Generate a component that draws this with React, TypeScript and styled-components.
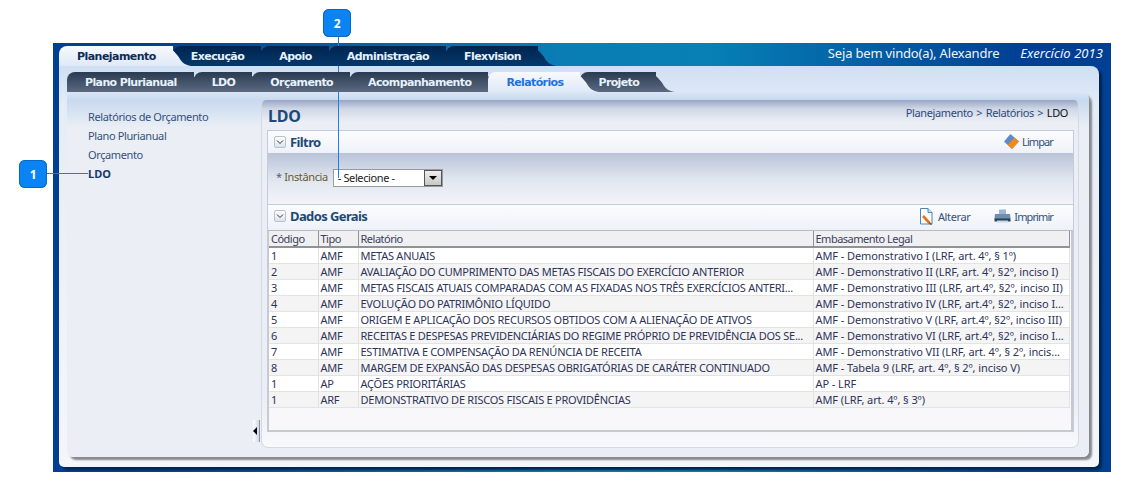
import React from 'react';
import styled, { createGlobalStyle } from 'styled-components';

const GlobalStyle = createGlobalStyle`
  html, body {
    margin: 0;
    padding: 0;
    background: #fff;
  }
  body {
    font-family: 'Noto Sans', 'DejaVu Sans', sans-serif;
    font-size: 11px;
    letter-spacing: -0.38px;
    color: #29355a;
  }
`;

const Page = styled.div`
  position: relative;
  width: 1125px;
  height: 486px;
  padding: 43px 14px 14px 53px;
  box-sizing: border-box;
  overflow: hidden;
`;

const Frame = styled.div`
  width: 1058px;
  height: 429px;
  display: flex;
  flex-direction: column;
  padding-left: 6px;
  box-sizing: border-box;
  background: linear-gradient(90deg, #003f94 0%, #013f8f 8%, #0a7db5 48%, #0780b6 62%, #003f94 92%, #003f94 100%);
`;

const TopBar = styled.div`
  display: flex;
  justify-content: space-between;
  align-items: flex-start;
  height: 23px;
  padding-top: 3px;
  box-sizing: border-box;
`;

const TabRow = styled.div`
  display: flex;
  height: 20px;
`;

const Tab = styled.div<{ $active?: boolean; $dark?: boolean; $z: number }>`
  position: relative;
  height: 20px;
  padding: 1px 17px 0 18px;
  box-sizing: border-box;
  display: flex;
  align-items: center;
  font-family: 'DejaVu Sans', sans-serif;
  font-weight: bold;
  font-size: 11px;
  letter-spacing: ${(p) => (p.$dark ? '-0.55px' : '-0.62px')};
  white-space: nowrap;
  border-radius: 8px 0 0 0;
  z-index: ${(p) => (p.$active ? 20 : p.$z)};
  color: ${(p) => (p.$active ? (p.$dark ? '#0f2a55' : '#1f70e0') : '#e6f2fb')};
  background: ${(p) =>
    p.$active
      ? 'linear-gradient(180deg, #f7f9fd 0%, #dfe9f7 100%)'
      : p.$dark
        ? 'linear-gradient(180deg, #00244f 0%, #05386b 100%)'
        : 'linear-gradient(180deg, #2a3a50 0%, #5b6a80 100%)'};
  &::after {
    content: '';
    position: absolute;
    top: 0;
    left: 100%;
    margin-left: -12px;
    width: 30px;
    height: 20px;
    background: inherit;
    clip-path: path('M0 0 C10 0 14 6 18 11 C21 17 25 19 30 20 L0 20 Z');
  }
`;

const Welcome = styled.div`
  display: flex;
  gap: 21px;
  padding: 0 8px 0 0;
  margin-top: -1px;
  color: #eef5fc;
  font-size: 13px;
  letter-spacing: -0.18px;
  line-height: 16px;
`;

const Year = styled.span`
  font-style: italic;
  font-size: 13px;
  letter-spacing: 0.05px;
`;

const Shell = styled.div`
  flex: 1;
  width: 1040px;
  margin-bottom: 5px;
  padding: 6px 10px 10px 8px;
  box-sizing: border-box;
  display: flex;
  flex-direction: column;
  border-radius: 0 8px 5px 5px;
  background: linear-gradient(180deg, #cfdff3 0%, #e4ecf7 10%, #ebeff5 30%, #f4f6fa 100%);
  box-shadow: 3px 3px 2px #00264f;
`;

const Inner = styled.div`
  flex: 1;
  display: flex;
  border-radius: 0 8px 6px 6px;
  background: linear-gradient(180deg, #dbe6f5 0, #c8d9ef 8px, #ebeff5 36px);
  box-shadow: 3px 3px 2px #858a90;
`;

const Sidebar = styled.nav`
  width: 194px;
  flex: none;
  padding: 17px 0 0 21px;
  box-sizing: border-box;
  position: relative;
`;

const NavItem = styled.div<{ $current?: boolean }>`
  height: 19px;
  line-height: 16px;
  color: ${(p) => (p.$current ? '#173a6c' : '#35507a')};
  font-weight: ${(p) => (p.$current ? 'bold' : 'normal')};
  letter-spacing: ${(p) => (p.$current ? '0' : '-0.38px')};
`;

const Collapse = styled.button`
  position: absolute;
  right: 1px;
  bottom: 15px;
  width: 7px;
  height: 22px;
  padding: 0;
  border: 0;
  border-right: 1px solid #8b93a0;
  background: linear-gradient(90deg, #fff, #cfd8ea);
  &::before {
    content: '';
    position: absolute;
    left: 0;
    top: 7px;
    border: 4px solid transparent;
    border-left: 0;
    border-right: 4px solid #000;
  }
`;

const Main = styled.main`
  width: 818px;
  height: 348px;
  margin-top: 8px;
  padding: 0 5px 0 5px;
  box-sizing: border-box;
  display: flex;
  flex-direction: column;
  border: 1px solid #d5dae2;
  border-top: 0;
  border-radius: 5px 5px 7px 7px;
  background: linear-gradient(180deg, #98a6c6 0, #d0d8e6 9px, #ebeff5 22px, #ebeff5 300px, #f7f9fb 100%);
`;

const TitleRow = styled.div`
  height: 30px;
  display: flex;
  justify-content: space-between;
  flex: none;
`;

const Title = styled.h1`
  margin: 6px 0 0 1px;
  font-size: 16px;
  line-height: 20px;
  letter-spacing: -0.2px;
  color: #1c4a7c;
`;

const Breadcrumb = styled.div`
  margin: 5px 5px 0 0;
  line-height: 16px;
  word-spacing: 1px;
  color: #2d4a7c;
  b {
    font-weight: normal;
    color: #111;
  }
`;

const Box = styled.section`
  width: 807px;
  height: 302px;
  display: flex;
  flex-direction: column;
  border: 1px solid #c3cbdc;
  border-bottom: 0;
  box-sizing: border-box;
`;

const SectionHeader = styled.header<{ $h: number; $lift: number }>`
  flex: none;
  height: ${(p) => p.$h}px;
  padding: 0 20px ${(p) => p.$lift}px 6px;
  display: flex;
  align-items: center;
  box-sizing: border-box;
  background: linear-gradient(180deg, #fbfcfe 0%, #eef2f8 100%);
`;

const Toggle = styled.span`
  width: 10px;
  height: 10px;
  margin-right: 4px;
  display: flex;
  align-items: center;
  justify-content: center;
  border: 1px solid #b9c0ce;
  border-radius: 2px;
  background: linear-gradient(180deg, #fff, #dde3ee);
`;

const SectionTitle = styled.h2`
  margin: 0;
  flex: 1;
  font-size: 13px;
  font-weight: bold;
  letter-spacing: -0.6px;
  color: #1d4a74;
`;

const Action = styled.span<{ $tight?: boolean }>`
  display: flex;
  align-items: center;
  gap: 3px;
  margin-left: 24px;
  letter-spacing: ${(p) => (p.$tight ? '-0.9px' : '-0.38px')};
  color: #35507a;
`;

const FilterBody = styled.div`
  flex: none;
  height: 52px;
  padding: 16px 0 0 8px;
  display: flex;
  align-items: flex-start;
  box-sizing: border-box;
  border-bottom: 1px solid #c3cbdc;
  background: linear-gradient(180deg, #b9c4d8 0%, #dfe5ef 50%, #f2f4f9 100%);
`;

const FieldLabel = styled.label`
  color: #6b5a2a;
  line-height: 18px;
  margin: -1px 5px 0 0;
  i {
    font-style: normal;
    color: #55617c;
  }
`;

const Select = styled.div`
  width: 104px;
  height: 16px;
  display: flex;
  justify-content: space-between;
  border: 1px solid #9a9a9a;
  background: #fff;
  color: #222;
  line-height: 16px;
  padding-left: 4px;
  box-sizing: content-box;
`;

const SelectButton = styled.span`
  width: 16px;
  height: 14px;
  display: flex;
  align-items: center;
  justify-content: center;
  border: 1px solid #555;
  background: linear-gradient(180deg, #eee, #c7c7c7);
  &::before {
    content: '';
    border: 4px solid transparent;
    border-bottom: 0;
    border-top: 4px solid #000;
  }
`;

const TableWrap = styled.div`
  flex: none;
  height: 202px;
  width: 805px;
  box-sizing: border-box;
  border: 2px solid #c6c9cf;
  border-top: 1px solid #b6bac2;
  border-left-width: 1px;
  background: #f8f8fb;
  overflow: hidden;
`;

const Table = styled.table`
  border-collapse: collapse;
  table-layout: fixed;
  width: 800px;
`;

const Th = styled.th<{ $w: number }>`
  width: ${(p) => p.$w}px;
  height: 16px;
  padding: 0 3px 0 2px;
  box-sizing: border-box;
  text-align: left;
  font-weight: normal;
  line-height: 15px;
  letter-spacing: -0.5px;
  color: #3b3f58;
  background: #f0f0f3;
  border-right: 1px solid #8f9299;
  border-bottom: 2px solid #8f9299;
`;

const Row = styled.tr<{ $odd: boolean }>`
  background: ${(p) => (p.$odd ? '#ffffff' : '#f4f4f4')};
`;

const Td = styled.td<{ $legal?: boolean }>`
  height: 16px;
  padding: 0 2px;
  box-sizing: border-box;
  line-height: 15px;
  letter-spacing: ${(p) => (p.$legal ? '-0.08px' : '-0.25px')};
  color: #2e3358;
  white-space: nowrap;
  overflow: hidden;
  border-right: 1px solid #e3e3e3;
  border-bottom: 1px solid #e3e3e3;
`;

const Badge = styled.div<{ $x: number; $y: number }>`
  position: absolute;
  left: ${(p) => p.$x}px;
  top: ${(p) => p.$y}px;
  width: 28px;
  height: 28px;
  display: flex;
  align-items: center;
  justify-content: center;
  border-radius: 6px;
  background: #0a84f5;
  box-shadow: inset 0 0 0 1px #0569c8;
  color: #fff;
  font-size: 12px;
  font-weight: bold;
`;

const Leader = styled.div<{ $x: number; $y: number; $w: number; $h: number }>`
  position: absolute;
  left: ${(p) => p.$x}px;
  top: ${(p) => p.$y}px;
  width: ${(p) => p.$w}px;
  height: ${(p) => p.$h}px;
  background: #1a7fe8;
`;

const ChevronIcon = () => (
  <svg width="8" height="6" viewBox="0 0 8 6">
    <path d="M1 1.5 L4 4.5 L7 1.5" fill="none" stroke="#333" strokeWidth="1" />
  </svg>
);

const EraserIcon = () => (
  <svg width="15" height="15" viewBox="0 0 15 15">
    <path d="M6.5 1 L14 7.5 L8 14 L1 7.5 Z" fill="#5b8cc8" stroke="#5b8cc8" strokeLinejoin="round" strokeWidth="1.4" />
    <path d="M10.5 4.5 L14 7.5 L8 14 L4.5 11 Z" fill="#f08a1d" stroke="#f08a1d" strokeLinejoin="round" strokeWidth="1.2" />
  </svg>
);

const EditIcon = () => (
  <svg width="16" height="17" viewBox="0 0 16 17">
    <path d="M1.5 0.5 H9 L13 4.5 V16 H1.5 Z" fill="#fbfcfe" stroke="#4b86b4" />
    <path d="M9 0.5 V4.5 H13" fill="#cfe0ee" stroke="#4b86b4" />
    <path d="M4 8 L10.5 15" stroke="#e8701a" strokeWidth="2.6" />
    <path d="M10 14.5 L12.5 16.5" stroke="#a83a10" strokeWidth="1.6" />
  </svg>
);

const PrintIcon = () => (
  <svg width="17" height="14" viewBox="0 0 17 14">
    <path d="M5 0.5 H12 V5 H5 Z" fill="#9ab8d6" />
    <path d="M1 5 H16 L16.5 10 H0.5 Z" fill="#6d8fb0" />
    <path d="M0.5 9.5 H16.5 V12.5 H0.5 Z" fill="#2b3f55" />
    <path d="M3 11.5 H14 V13.5 H3 Z" fill="#c8d8e8" />
  </svg>
);

const topTabs = ['Planejamento', 'Execução', 'Apoio', 'Administração', 'Flexvision'];
const subTabs = ['Plano Plurianual', 'LDO', 'Orçamento', 'Acompanhamento', 'Relatórios', 'Projeto'];
const sideItems = ['Relatórios de Orçamento', 'Plano Plurianual', 'Orçamento'];

const rows = [
  ['1', 'AMF', 'METAS ANUAIS', 'AMF - Demonstrativo I (LRF, art. 4º, § 1º)'],
  ['2', 'AMF', 'AVALIAÇÃO DO CUMPRIMENTO DAS METAS FISCAIS DO EXERCÍCIO ANTERIOR', 'AMF - Demonstrativo II (LRF, art. 4º, §2º, inciso I)'],
  ['3', 'AMF', 'METAS FISCAIS ATUAIS COMPARADAS COM AS FIXADAS NOS TRÊS EXERCÍCIOS ANTERI...', 'AMF - Demonstrativo III (LRF, art.4º, §2º, inciso II)'],
  ['4', 'AMF', 'EVOLUÇÃO DO PATRIMÔNIO LÍQUIDO', 'AMF - Demonstrativo IV (LRF, art.4º, §2º, inciso I...'],
  ['5', 'AMF', 'ORIGEM E APLICAÇÃO DOS RECURSOS OBTIDOS COM A ALIENAÇÃO DE ATIVOS', 'AMF - Demonstrativo V (LRF, art.4º, §2º, inciso III)'],
  ['6', 'AMF', 'RECEITAS E DESPESAS PREVIDENCIÁRIAS DO REGIME PRÓPRIO DE PREVIDÊNCIA DOS SE...', 'AMF - Demonstrativo VI (LRF, art.4º, §2º, inciso I...'],
  ['7', 'AMF', 'ESTIMATIVA E COMPENSAÇÃO DA RENÚNCIA DE RECEITA', 'AMF - Demonstrativo VII (LRF, art. 4º, § 2º, incis...'],
  ['8', 'AMF', 'MARGEM DE EXPANSÃO DAS DESPESAS OBRIGATÓRIAS DE CARÁTER CONTINUADO', 'AMF - Tabela 9 (LRF, art. 4º, § 2º, inciso V)'],
  ['1', 'AP', 'AÇÕES PRIORITÁRIAS', 'AP - LRF'],
  ['1', 'ARF', 'DEMONSTRATIVO DE RISCOS FISCAIS E PROVIDÊNCIAS', 'AMF (LRF, art. 4º, § 3º)'],
];

const App: React.FC = () => (
  <Page>
    <GlobalStyle />
    <Frame>
      <TopBar>
        <TabRow>
          {topTabs.map((t, i) => (
            <Tab key={t} $dark $active={i === 0} $z={10 - i}>
              {t}
            </Tab>
          ))}
        </TabRow>
        <Welcome>
          <span>Seja bem vindo(a), Alexandre</span>
          <Year>Exercício 2013</Year>
        </Welcome>
      </TopBar>
      <Shell>
        <TabRow>
          {subTabs.map((t, i) => (
            <Tab key={t} $active={t === 'Relatórios'} $z={10 - i}>
              {t}
            </Tab>
          ))}
        </TabRow>
        <Inner>
          <Sidebar>
            {sideItems.map((s) => (
              <NavItem key={s}>{s}</NavItem>
            ))}
            <NavItem $current>LDO</NavItem>
            <Collapse type="button" aria-label="Recolher" />
          </Sidebar>
          <Main>
            <TitleRow>
              <Title>LDO</Title>
              <Breadcrumb>
                Planejamento &gt; Relatórios &gt; <b>LDO</b>
              </Breadcrumb>
            </TitleRow>
            <Box>
              <SectionHeader $h={22} $lift={1}>
                <Toggle>
                  <ChevronIcon />
                </Toggle>
                <SectionTitle>Filtro</SectionTitle>
                <Action $tight>
                  <EraserIcon />
                  Limpar
                </Action>
              </SectionHeader>
              <FilterBody>
                <FieldLabel>
                  <i>* </i>Instância
                </FieldLabel>
                <Select>
                  - Selecione -
                  <SelectButton />
                </Select>
              </FilterBody>
              <SectionHeader $h={25} $lift={3}>
                <Toggle>
                  <ChevronIcon />
                </Toggle>
                <SectionTitle>Dados Gerais</SectionTitle>
                <Action>
                  <EditIcon />
                  Alterar
                </Action>
                <Action $tight>
                  <PrintIcon />
                  Imprimir
                </Action>
              </SectionHeader>
              <TableWrap>
                <Table>
                  <thead>
                    <tr>
                      <Th $w={49}>Código</Th>
                      <Th $w={40}>Tipo</Th>
                      <Th $w={455}>Relatório</Th>
                      <Th $w={256}>Embasamento Legal</Th>
                    </tr>
                  </thead>
                  <tbody>
                    {rows.map((r, i) => (
                      <Row key={r[2]} $odd={i % 2 === 0}>
                        {r.map((c, j) => (
                          <Td key={j} $legal={j === 3}>
                            {c}
                          </Td>
                        ))}
                      </Row>
                    ))}
                  </tbody>
                </Table>
              </TableWrap>
            </Box>
          </Main>
        </Inner>
      </Shell>
    </Frame>
    <Leader $x={46} $y={173} $w={42} $h={1} />
    <Badge $x={19} $y={160}>1</Badge>
    <Leader $x={338} $y={37} $w={1} $h={141} />
    <Badge $x={323} $y={9}>2</Badge>
  </Page>
);

export default App;
